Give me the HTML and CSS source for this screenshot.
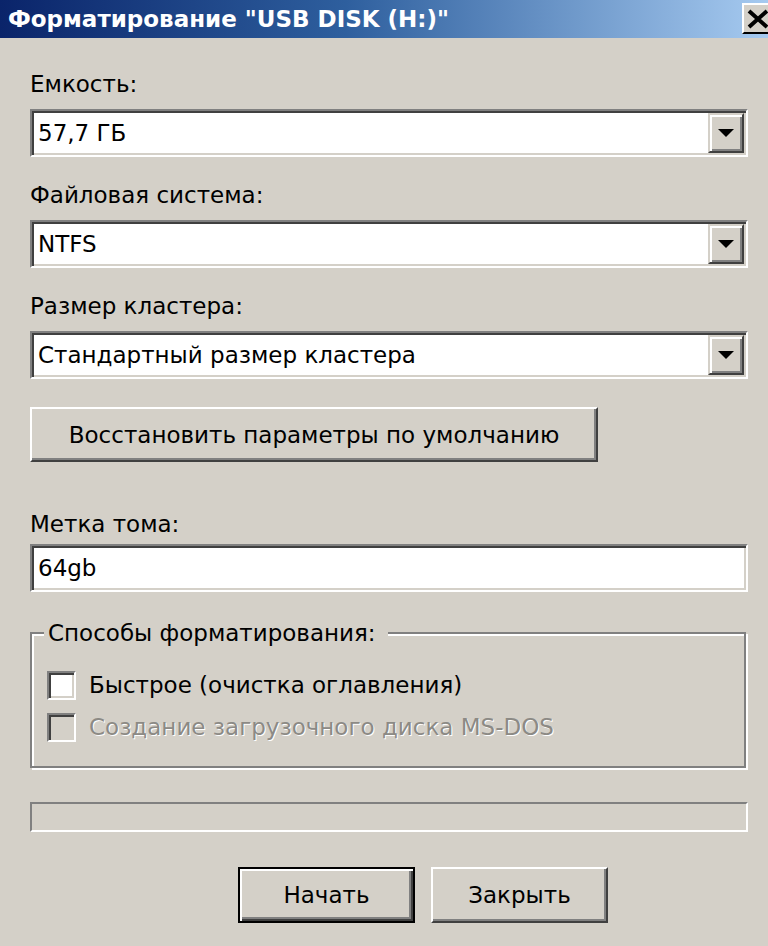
FILE: index.html
```html
<!DOCTYPE html>
<html lang="ru">
<head>
<meta charset="utf-8">
<title>Форматирование</title>
<link rel="stylesheet" href="styles.css">
</head>
<body>
<div class="window">
  <div class="titlebar">
    <span class="title">Форматирование "USB DISK (H:)"</span>
    <span class="close-btn">
      <svg width="26" height="22" viewBox="0 0 26 22"><path d="M3 3 L21 19 M21 3 L3 19" stroke="#000" stroke-width="4" fill="none"/></svg>
    </span>
  </div>
  <div class="content">
    <div class="label">Емкость:</div>
    <div class="combo">
      <span class="value">57,7 ГБ</span>
      <span class="drop"><svg width="16" height="8" viewBox="0 0 16 8"><path d="M0 0 H16 L8 8 Z" fill="#000"/></svg></span>
    </div>
    <div class="label">Файловая система:</div>
    <div class="combo">
      <span class="value">NTFS</span>
      <span class="drop"><svg width="16" height="8" viewBox="0 0 16 8"><path d="M0 0 H16 L8 8 Z" fill="#000"/></svg></span>
    </div>
    <div class="label">Размер кластера:</div>
    <div class="combo combo-last">
      <span class="value">Стандартный размер кластера</span>
      <span class="drop"><svg width="16" height="8" viewBox="0 0 16 8"><path d="M0 0 H16 L8 8 Z" fill="#000"/></svg></span>
    </div>
    <button class="btn btn-wide">Восстановить параметры по умолчанию</button>
    <div class="label label-volume">Метка тома:</div>
    <div class="field"><span class="value">64gb</span></div>
    <fieldset class="group">
      <legend class="group-title">Способы форматирования:</legend>
      <div class="check-row">
        <span class="checkbox"></span>
        <span class="check-label">Быстрое (очистка оглавления)</span>
      </div>
      <div class="check-row row-second">
        <span class="checkbox checkbox-disabled"></span>
        <span class="check-label text-disabled">Создание загрузочного диска MS-DOS</span>
      </div>
    </fieldset>
    <div class="progress"></div>
    <div class="actions">
      <button class="btn btn-std btn-default">Начать</button>
      <button class="btn btn-std">Закрыть</button>
    </div>
  </div>
</div>
</body>
</html>
```
FILE: styles.css
```css
html, body {
  margin: 0;
  padding: 0;
  background: #d4d0c8;
}
body {
  font-family: "DejaVu Sans", sans-serif;
  font-size: 23px;
  color: #000;
}
.window {
  width: 768px;
  height: 946px;
  overflow: hidden;
  background: #d4d0c8;
}
.titlebar {
  height: 38px;
  display: flex;
  align-items: flex-start;
  background: linear-gradient(to right, #0a246a 0%, #2e5f9e 45%, #a6caf0 100%);
}
.title {
  padding-left: 8px;
  line-height: 38px;
  color: #fff;
  font-weight: bold;
  font-size: 23px;
  white-space: nowrap;
}
.close-btn {
  margin-left: auto;
  margin-right: -12px;
  margin-top: 3px;
  width: 38px;
  height: 31px;
  box-sizing: border-box;
  background: #d4d0c8;
  border-top: 2px solid #fff;
  border-left: 2px solid #fff;
  border-bottom: 2px solid #000;
  display: flex;
  align-items: center;
  padding-left: 2px;
  flex-shrink: 0;
}
.content {
  padding: 32px 20px 0 30px;
}
.label {
  height: 28px;
  line-height: 28px;
  margin-bottom: 11px;
  white-space: nowrap;
}
.combo, .field {
  height: 48px;
  box-sizing: border-box;
  border: 2px solid;
  border-color: #808080 #fff #fff #808080;
  box-shadow: inset 2px 2px 0 #404040, inset -2px -2px 0 #d4d0c8;
  background: #fff;
  padding: 2px;
  display: flex;
  align-items: stretch;
  margin-bottom: 24px;
}
.combo-last {
  margin-bottom: 28px;
}
.value {
  flex: 1;
  padding-left: 4px;
  line-height: 40px;
  white-space: nowrap;
}
.drop {
  width: 36px;
  box-sizing: border-box;
  background: #d4d0c8;
  border: 2px solid;
  border-color: #d4d0c8 #404040 #404040 #d4d0c8;
  box-shadow: inset 2px 2px 0 #fff, inset -2px -2px 0 #808080;
  display: flex;
  align-items: center;
  justify-content: center;
}
.btn {
  font: inherit;
  color: #000;
  margin: 0;
  padding: 0;
  box-sizing: border-box;
  background: #d4d0c8;
  border: 2px solid;
  border-color: #fff #404040 #404040 #fff;
  box-shadow: inset -2px -2px 0 #808080;
  display: flex;
  align-items: center;
  justify-content: center;
  white-space: nowrap;
}
.btn-wide {
  width: 568px;
  height: 55px;
}
.label-volume {
  margin-top: 48px;
  margin-bottom: 6px;
}
.field {
  margin-bottom: 0;
}
.group {
  margin: 27px 2px 0 0;
  padding: 23px 14px 24px 15px;
  border: 2px solid #808080;
  box-shadow: 2px 2px 0 #fff, inset 2px 2px 0 #fff;
  min-inline-size: auto;
}
.group-title {
  line-height: 28px;
  padding: 0 12px 0 4px;
  margin-left: -3px;
  background: #d4d0c8;
  white-space: nowrap;
}
.check-row {
  display: flex;
  align-items: center;
  height: 30px;
  gap: 13px;
}
.row-second {
  margin-top: 12px;
}
.checkbox {
  width: 29px;
  height: 29px;
  box-sizing: border-box;
  border: 2px solid;
  border-color: #808080 #fff #fff #808080;
  box-shadow: inset 2px 2px 0 #404040, inset -2px -2px 0 #d4d0c8;
  background: #fff;
  flex-shrink: 0;
}
.checkbox-disabled {
  background: #d4d0c8;
}
.check-label {
  white-space: nowrap;
}
.text-disabled {
  color: #8c8a85;
  text-shadow: 1px 1px 0 #fff;
}
.progress {
  margin-top: 34px;
  height: 30px;
  box-sizing: border-box;
  border: 2px solid;
  border-color: #808080 #fff #fff #808080;
}
.actions {
  margin-top: 35px;
  display: flex;
  gap: 16px;
  padding-left: 208px;
}
.btn-std {
  width: 177px;
  height: 56px;
}
.btn-default {
  border: 2px solid #000;
  box-shadow: inset 2px 2px 0 #fff, inset -2px -2px 0 #404040, inset -4px -4px 0 #808080;
}
```
